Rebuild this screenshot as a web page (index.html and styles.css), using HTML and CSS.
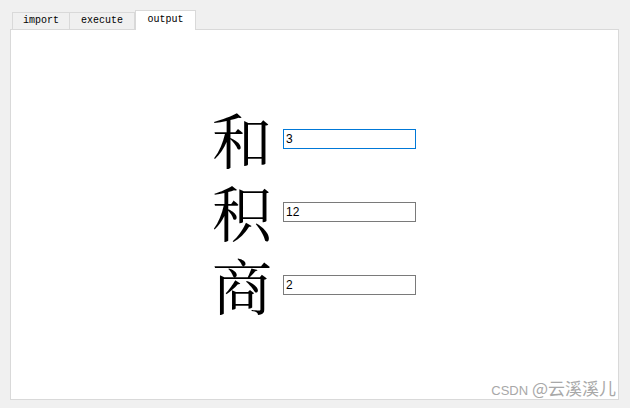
FILE: index.html
```html
<!DOCTYPE html>
<html>
<head>
<meta charset="utf-8">
<link rel="stylesheet" href="styles.css">
</head>
<body>
<div class="window">
  <div class="tabs">
    <div class="tab">import</div>
    <div class="tab">execute</div>
    <div class="tab active">output</div>
  </div>
  <div class="panel">
    <div class="rows">
      <div class="row"><span class="label">和</span><input class="field focused" value="3"></div>
      <div class="row"><span class="label">积</span><input class="field" value="12"></div>
      <div class="row"><span class="label">商</span><input class="field" value="2"></div>
    </div>
  </div>
</div>
<div class="watermark"><span class="latin">CSDN</span> @云溪溪儿</div>
</body>
</html>
```
FILE: styles.css
```css
html, body {
  margin: 0;
  padding: 0;
  background: #f0f0f0;
  width: 630px;
  height: 408px;
  overflow: hidden;
}
.window {
  padding: 10px 11px 0 10px;
}
.tabs {
  display: flex;
  align-items: flex-end;
  padding-left: 2px;
  height: 19px;
  position: relative;
  z-index: 1;
}
.tab {
  box-sizing: border-box;
  height: 17px;
  border: 1px solid #d9d9d9;
  border-bottom: none;
  background: #f0f0f0;
  font-family: "Liberation Mono", monospace;
  font-size: 10px;
  line-height: 16px;
  color: #000;
  text-align: center;
}
.tab:nth-child(1) { width: 58px; }
.tab:nth-child(2) { width: 65px; border-left: none; }
.tab.active {
  width: 61px;
  height: 20px;
  margin-bottom: -1px;
  background: #fff;
  line-height: 18px;
  border-left: 1px solid #d9d9d9;
}
.panel {
  box-sizing: border-box;
  height: 371px;
  width: 609px;
  background: #fff;
  border: 1px solid #d9d9d9;
  padding: 72px 0 0 201px;
}
.rows {
  display: flex;
  flex-direction: column;
}
.row {
  display: flex;
  align-items: center;
  height: 73px;
}
.label {
  display: block;
  width: 60px;
  height: 73px;
  font-family: "Noto Serif CJK SC", "Noto Sans CJK SC", serif;
  font-size: 60px;
  line-height: 73px;
  color: #000;
}
.field {
  box-sizing: border-box;
  margin: 1px 0 0 11px;
  width: 133px;
  height: 20px;
  border: 1px solid #7a7a7a;
  padding: 0 2px;
  font-family: "Liberation Sans", Arial, sans-serif;
  font-size: 12px;
  color: #000;
  outline: none;
  background: #fff;
}
.field.focused {
  border-color: #0078d7;
}
.watermark {
  position: absolute;
  right: 14px;
  top: 377px;
  font-family: "Noto Sans CJK SC", sans-serif;
  font-size: 17px;
  line-height: 22px;
  color: #a8a8a8;
  white-space: nowrap;
}
.latin {
  font-family: "Liberation Sans", sans-serif;
  font-size: 13px;
}
```
